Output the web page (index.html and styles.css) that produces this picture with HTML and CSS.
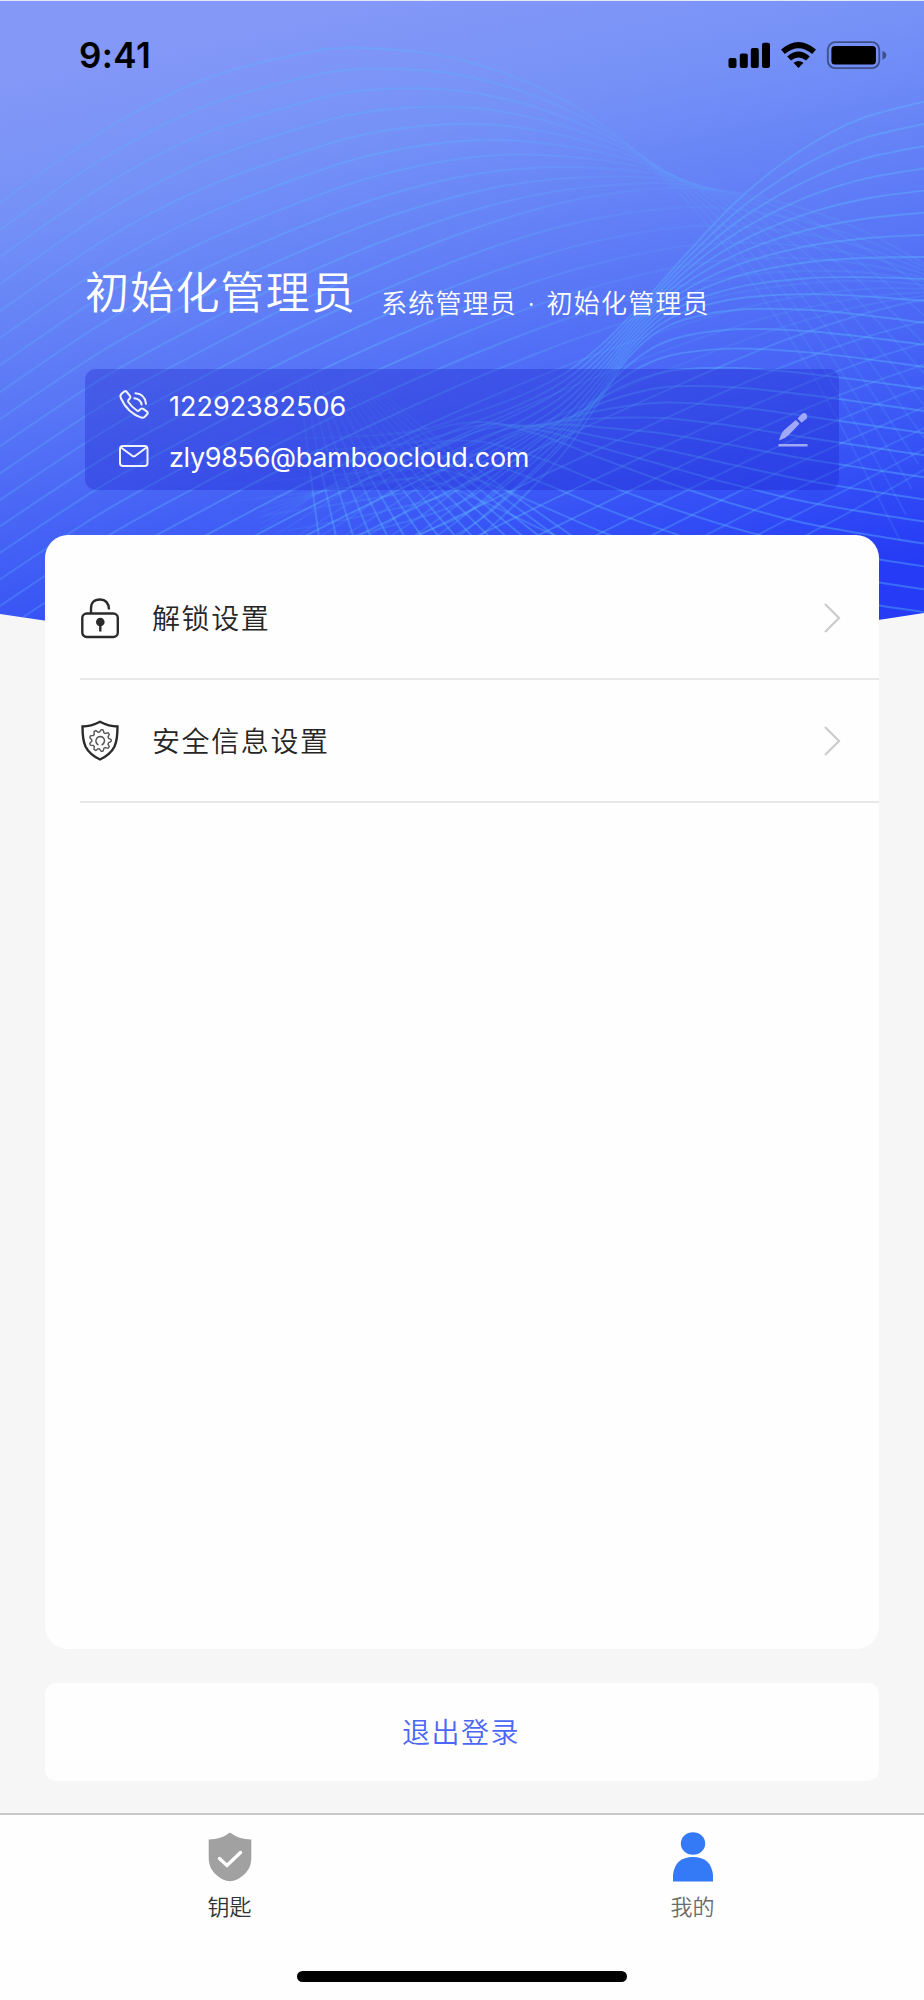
FILE: index.html
```html
<!DOCTYPE html>
<html lang="zh-CN">
<head>
    <meta charset="UTF-8">
    <meta name="viewport" content="width=device-width, initial-scale=1.0">
    <title>我的</title>
    <link rel="stylesheet" href="styles.css">
</head>
<body>
    <svg class="header-art" viewBox="0 0 924 660">
        <defs>
            <linearGradient id="sky" gradientUnits="userSpaceOnUse" x1="400" y1="0" x2="535" y2="640">
                <stop offset="0" stop-color="#8398f7"/>
                <stop offset="0.2" stop-color="#7591f7"/>
                <stop offset="0.5" stop-color="#5876f6"/>
                <stop offset="0.78" stop-color="#3b58f5"/>
                <stop offset="1" stop-color="#253bf5"/>
            </linearGradient>
            <clipPath id="curve"><path d="M0 0H924V613Q462 687 0 614Z"/></clipPath>
            <linearGradient id="fadeLeft" gradientUnits="userSpaceOnUse" x1="0" y1="0" x2="924" y2="0">
                <stop offset="0" stop-color="#5cb0ff" stop-opacity="0.3"/>
                <stop offset="0.4" stop-color="#5cb0ff" stop-opacity="0.44"/>
                <stop offset="0.55" stop-color="#5cb0ff" stop-opacity="0.32"/>
                <stop offset="0.7" stop-color="#5cb0ff" stop-opacity="0.12"/>
                <stop offset="1" stop-color="#5cb0ff" stop-opacity="0.16"/>
            </linearGradient>
            <linearGradient id="fadeLow" gradientUnits="userSpaceOnUse" x1="0" y1="0" x2="924" y2="0">
                <stop offset="0" stop-color="#5cb0ff" stop-opacity="0.22"/>
                <stop offset="0.5" stop-color="#5cb0ff" stop-opacity="0.42"/>
                <stop offset="1" stop-color="#5cb0ff" stop-opacity="0.24"/>
            </linearGradient>
            <linearGradient id="fadeRight" gradientUnits="userSpaceOnUse" x1="200" y1="0" x2="924" y2="0">
                <stop offset="0" stop-color="#5cb8ff" stop-opacity="0"/>
                <stop offset="0.5" stop-color="#5cb8ff" stop-opacity="0.34"/>
                <stop offset="1" stop-color="#5cb8ff" stop-opacity="0.4"/>
            </linearGradient>
            <linearGradient id="fadeDown" gradientUnits="userSpaceOnUse" x1="0" y1="370" x2="0" y2="530">
                <stop offset="0" stop-color="#5cb8ff" stop-opacity="0"/>
                <stop offset="1" stop-color="#5cb8ff" stop-opacity="0.38"/>
            </linearGradient>
        </defs>
        <g clip-path="url(#curve)">
            <rect width="924" height="660" fill="url(#sky)"/>
            <g id="waves"></g>
            <rect width="924" height="1" fill="#e4e7f5"/>
        </g>
    </svg>

    <div class="page">
        <div class="status-bar">
            <span class="time">9:41</span>
            <svg class="status-icons" viewBox="0 0 160 30">
                <rect x="0.5" y="18" width="8" height="10" rx="2"/>
                <rect x="11.8" y="13.5" width="8" height="14.5" rx="2"/>
                <rect x="22.8" y="8" width="8" height="20" rx="2"/>
                <rect x="34" y="2.7" width="8" height="25.3" rx="2"/>
                <path d="M53 9.6Q70.500 -5.600 88 9.600L84.200 14Q70.500 2.500 56.800 14Z"/>
                <path d="M59.200 16.500Q70.500 6.500 81.800 16.500L78 20.500Q70.500 14.500 63 20.500Z"/>
                <path d="M65.500 22.800Q70.500 19 75.500 22.800L70.500 28Z"/>
                <rect class="battery" x="99.800" y="2.200" width="51.500" height="26" rx="7.500"/>
                <rect x="103.400" y="6" width="44.500" height="18.500" rx="3.500"/>
                <path class="battery-cap" d="M154.500 11Q158.300 12.500 158.300 15.300T154.500 19.800Z"/>
            </svg>
        </div>

        <div class="profile">
            <h1 class="name">初始化管理员</h1>
            <span class="role">系统管理员 · 初始化管理员</span>
        </div>

        <div class="contact">
            <div class="contact-list">
                <div class="contact-item">
                    <svg class="contact-icon" viewBox="0 0 32 32">
                        <path d="M3.500 4.800L6.200 2.500Q7.500 1.500 8.700 2.900L12 7Q13 8.300 11.800 9.500L10.400 11Q9.600 12 10.300 13Q14 18.300 18.900 21.500Q20 22.300 21 21.400L22.600 20Q23.800 19 25.200 19.900L29 22.600Q30.400 23.700 29.300 25L27 27.700Q25.700 29.200 23.400 28.600Q9.500 24 2.800 9Q1.800 6.500 3.500 4.800Z"/>
                        <path d="M17.500 4.300Q27 5 28 14.800M16.300 9.200Q22.600 9.800 23.600 15.600"/>
                    </svg>
                    <span class="phone">12292382506</span>
                </div>
                <div class="contact-item">
                    <svg class="contact-icon" viewBox="0 0 32 32">
                        <rect x="2" y="6" width="27.500" height="20" rx="3"/>
                        <path d="M3 7.500L14.200 15.800Q15.800 16.800 17.400 15.800L28.500 7.500"/>
                    </svg>
                    <span class="email">zly9856@bamboocloud.com</span>
                </div>
            </div>
            <svg class="edit-icon" viewBox="0 0 32 36">
                <path d="M2 28.500Q4 21 7.500 17.800L18.800 8L22.500 11.800L11.800 23Q8 27 2 28.500Z"/>
                <path d="M20.500 6.500L25 1.800Q27 .2 29.200 1.800Q31.200 4 29.800 6.500L24.500 10.800Z"/>
                <rect x="1.500" y="32" width="29" height="2.500"/>
            </svg>
        </div>

        <div class="menu">
            <div class="menu-item">
                <svg class="menu-icon" viewBox="0 0 40 42">
                    <rect x="2.300" y="16.500" width="35.500" height="23.500" rx="4.500"/>
                    <path d="M11 16V11.500Q11 2.500 20 2.500Q28.500 2.500 29 12.500"/>
                    <circle class="solid" cx="20.300" cy="25" r="4.300"/>
                    <path d="M20.300 26V34.500"/>
                </svg>
                <span class="menu-text">解锁设置</span>
                <svg class="arrow" viewBox="0 0 18 32"><path d="M2 2L16 16L2 30"/></svg>
            </div>
            <div class="menu-item">
                <svg class="menu-icon" viewBox="0 0 40 42">
                    <path d="M20 1.800Q11 6.500 2.500 6.500Q2.500 20 5.500 26.500Q9.500 34.500 20 39.500Q30.500 34.500 34.500 26.500Q37.500 20 37.500 6.500Q29 6.500 20 1.800Z"/>
                    <g class="thin">
                        <path id="gear" d=""/>
                        <path d="M18.500 24.800Q15.500 23.500 16 20Q17 16.500 20.500 16.500Q24.500 17.200 24.500 21Q23.800 24.300 21.500 24.900"/>
                    </g>
                </svg>
                <span class="menu-text">安全信息设置</span>
                <svg class="arrow" viewBox="0 0 18 32"><path d="M2 2L16 16L2 30"/></svg>
            </div>
        </div>

        <div class="logout">退出登录</div>

        <div class="tab-bar">
            <div class="tab">
                <svg class="tab-icon" viewBox="0 0 44 50">
                    <path fill="#a1a1a1" d="M22 .5Q31 7.500 43.300 7.500V26Q43.300 40 29 47.500Q22 51 15 47.500Q.7 40 .7 26V7.500Q13 7.500 22 .5Z"/>
                    <path class="check" d="M11.500 26.500L19 33.500L32.500 20.500"/>
                </svg>
                <span>钥匙</span>
            </div>
            <div class="tab active">
                <svg class="tab-icon" viewBox="0 0 44 50">
                    <ellipse fill="#347af6" cx="22" cy="11.500" rx="12.200" ry="11.300"/>
                    <path fill="#347af6" d="M2 49.500V43Q4 25 22 25T42 43V49.500Z"/>
                </svg>
                <span>我的</span>
            </div>
        </div>
        <div class="home-indicator"></div>
    </div>

    <script src="waves.js"></script>
</body>
</html>
```

FILE: styles.css
```css
* {
    margin: 0;
    padding: 0;
    box-sizing: border-box;
}

body {
    position: relative;
    width: 924px;
    height: 2000px;
    background: #f6f6f6;
    font-family: 'Inter', 'Noto Sans CJK SC', sans-serif;
    overflow: hidden;
}

svg {
    display: block;
    flex-shrink: 0;
}

/* header artwork behind the content */
.header-art {
    position: absolute;
    top: 0;
    left: 0;
    width: 924px;
    height: 660px;
}

#waves path {
    fill: none;
    stroke-width: 1.9;
}

.page {
    position: relative;
    display: flex;
    flex-direction: column;
    height: 100%;
}

.status-bar {
    display: flex;
    justify-content: space-between;
    align-items: center;
    height: 110px;
    padding: 0 36px 0 79px;
}

.time {
    font-size: 35px;
    font-weight: 600;
    letter-spacing: 0.4px;
    color: #000;
}

.status-icons {
    width: 160px;
    height: 30px;
}

.battery {
    fill: none;
    stroke: rgba(0, 0, 0, 0.45);
    stroke-width: 1.8;
}

.battery-cap {
    fill: rgba(0, 0, 0, 0.45);
}

.profile {
    display: flex;
    height: 259px;
    padding: 150px 85px 0;
    color: #fff;
    white-space: nowrap;
}

.name {
    width: 296px;
    font-size: 44px;
    font-weight: 350;
    line-height: 66px;
    letter-spacing: 1.2px;
}

.role {
    padding-top: 11px;
    font-size: 26px;
    font-weight: 350;
    line-height: 66px;
    letter-spacing: 1.2px;
    word-spacing: 2px;
}

.contact {
    display: flex;
    justify-content: space-between;
    align-items: center;
    height: 121px;
    margin: 0 85px;
    padding: 0 30px 0 33px;
    background: rgba(22, 26, 200, 0.3);
    border-radius: 11px;
}

.contact-item {
    display: flex;
    align-items: center;
    gap: 19px;
    height: 51px;
    padding-top: 2px;
    font-size: 27px;
    color: #fff;
}

.contact-item span {
    padding-top: 2px;
}

.email {
    letter-spacing: -0.33px;
}

.contact-icon {
    width: 32px;
    height: 32px;
    fill: none;
    stroke: #f0f2ff;
    stroke-width: 2;
    stroke-linecap: round;
    stroke-linejoin: round;
}

.edit-icon {
    width: 32px;
    height: 36px;
    fill: #a0a9f7;
}

.menu {
    height: 1114px;
    margin: 45px 45px 0;
    padding: 22px 0 0 35px;
    background: #fefefe;
    border-radius: 23px;
}

.menu-item {
    display: flex;
    align-items: center;
    height: 123px;
    padding-right: 38px;
    border-bottom: 2px solid #e8e8e8;
}

.menu-icon {
    width: 40px;
    height: 42px;
    fill: none;
    stroke: #2b2b2b;
    stroke-width: 2.4;
}

.menu-icon .solid {
    fill: #2b2b2b;
    stroke: none;
}

.menu-icon .thin {
    stroke: #555;
    stroke-width: 1.4;
}

.menu-text {
    flex: 1;
    margin-left: 32px;
    padding-bottom: 1px;
    font-size: 28px;
    font-weight: 350;
    letter-spacing: 1.6px;
    color: #262626;
}

.arrow {
    width: 18px;
    height: 32px;
    fill: none;
    stroke: #ccc;
    stroke-width: 2.2;
}

.logout {
    height: 98px;
    margin: 34px 45px 0;
    padding-right: 2px;
    background: #fefefe;
    border-radius: 11px;
    color: #4c67f5;
    font-size: 28px;
    font-weight: 350;
    line-height: 100px;
    letter-spacing: 1.5px;
    text-align: center;
}

.tab-bar {
    display: flex;
    height: 187px;
    margin-top: 32px;
    padding: 17px 0 0;
    background: #fefefe;
    border-top: 2px solid #c8c8c8;
}

.tab {
    flex: 1;
    display: flex;
    flex-direction: column;
    align-items: center;
    gap: 9px;
    padding-right: 4px;
    font-size: 22px;
    font-weight: 350;
    line-height: 32px;
    color: #333;
}

.tab.active {
    padding-right: 2px;
    color: #6b6b6b;
}

.tab-icon {
    width: 44px;
    height: 50px;
}

.check {
    fill: none;
    stroke: #fff;
    stroke-width: 3.4;
    stroke-linecap: round;
}

/* lies over the tab bar */
.home-indicator {
    position: absolute;
    left: 297px;
    bottom: 18px;
    width: 330px;
    height: 11px;
    background: #000;
    border-radius: 6px;
}
```

FILE: waves.js
```js
const waves = document.getElementById('waves');

// smooth path through a list of points
function smooth(p) {
    let d = `M${p[0][0]} ${p[0][1]}`;
    for (let i = 0; i < p.length - 1; i++) {
        const a = p[i - 1] || p[i];
        const b = p[i];
        const c = p[i + 1];
        const e = p[i + 2] || c;
        d += `C${b[0] + (c[0] - a[0]) / 6} ${b[1] + (c[1] - a[1]) / 6} ${c[0] - (e[0] - b[0]) / 6} ${c[1] - (e[1] - b[1]) / 6} ${c[0]} ${c[1]}`;
    }
    return d;
}

// draws count lines blending from one key curve to the next
function ribbon(from, to, count, stroke) {
    for (let i = 0; i < count; i++) {
        const t = i / count;
        const points = from.map((p, k) => [
            p[0] + (to[k][0] - p[0]) * t,
            p[1] + (to[k][1] - p[1]) * t
        ]);
        const path = document.createElementNS('http://www.w3.org/2000/svg', 'path');
        path.setAttribute('d', smooth(points));
        path.setAttribute('stroke', `url(#${stroke})`);
        waves.appendChild(path);
    }
}

const left = [
    [[-10, 210], [100, 133], [200, 81], [300, 54], [365, 48], [462, 60], [560, 98], [640, 155], [720, 240], [810, 370], [900, 540]],
    [[-10, 480], [100, 407], [190, 357], [300, 301], [400, 257], [500, 220], [590, 197], [690, 188], [780, 202], [870, 234], [960, 285]],
    [[-10, 745], [100, 674], [190, 624], [300, 565], [400, 515], [500, 467], [590, 425], [690, 380], [780, 342], [870, 312], [960, 292]],
    [[-10, 1010], [100, 940], [190, 890], [300, 830], [400, 780], [500, 728], [590, 680], [690, 625], [780, 575], [860, 530], [940, 480]]
];
ribbon(left[0], left[1], 10, 'fadeLeft');
ribbon(left[1], left[2], 10, 'fadeLeft');
ribbon(left[2], left[3], 9, 'fadeLow');

const right = [
    [[940, 98], [860, 119], [800, 151], [740, 198], [690, 250], [645, 300], [600, 346], [550, 382], [470, 414], [380, 435], [120, 442]],
    [[940, 325], [880, 317], [810, 310], [735, 310], [670, 325], [628, 358], [600, 400], [570, 445], [530, 490], [475, 540], [400, 590]],
    [[940, 546], [870, 535], [800, 522], [730, 503], [660, 480], [600, 458], [540, 435], [480, 422], [420, 435], [340, 480], [260, 530]],
    [[940, 660], [870, 650], [800, 637], [730, 622], [660, 602], [600, 580], [540, 552], [480, 520], [420, 490], [340, 490], [260, 500]]
];
ribbon(right[0], right[1], 10, 'fadeRight');
ribbon(right[1], right[2], 10, 'fadeRight');
ribbon(right[2], right[3], 5, 'fadeRight');

// mesh fanning out under the contact box
ribbon(
    [[284, 310], [300, 390], [310, 470], [320, 545]],
    [[300, 310], [390, 395], [490, 470], [610, 550]],
    16, 'fadeDown'
);

// cog teeth of the security icon
let gear = '';
for (let i = 0; i <= 72; i++) {
    const angle = i / 72 * Math.PI * 2;
    const r = 9.7 + 1.2 * Math.tanh(3 * Math.cos(angle * 9));
    gear += `${i ? 'L' : 'M'}${(20.3 + r * Math.cos(angle)).toFixed(2)} ${(20.5 + r * Math.sin(angle)).toFixed(2)}`;
}
document.getElementById('gear').setAttribute('d', gear + 'Z');
```
